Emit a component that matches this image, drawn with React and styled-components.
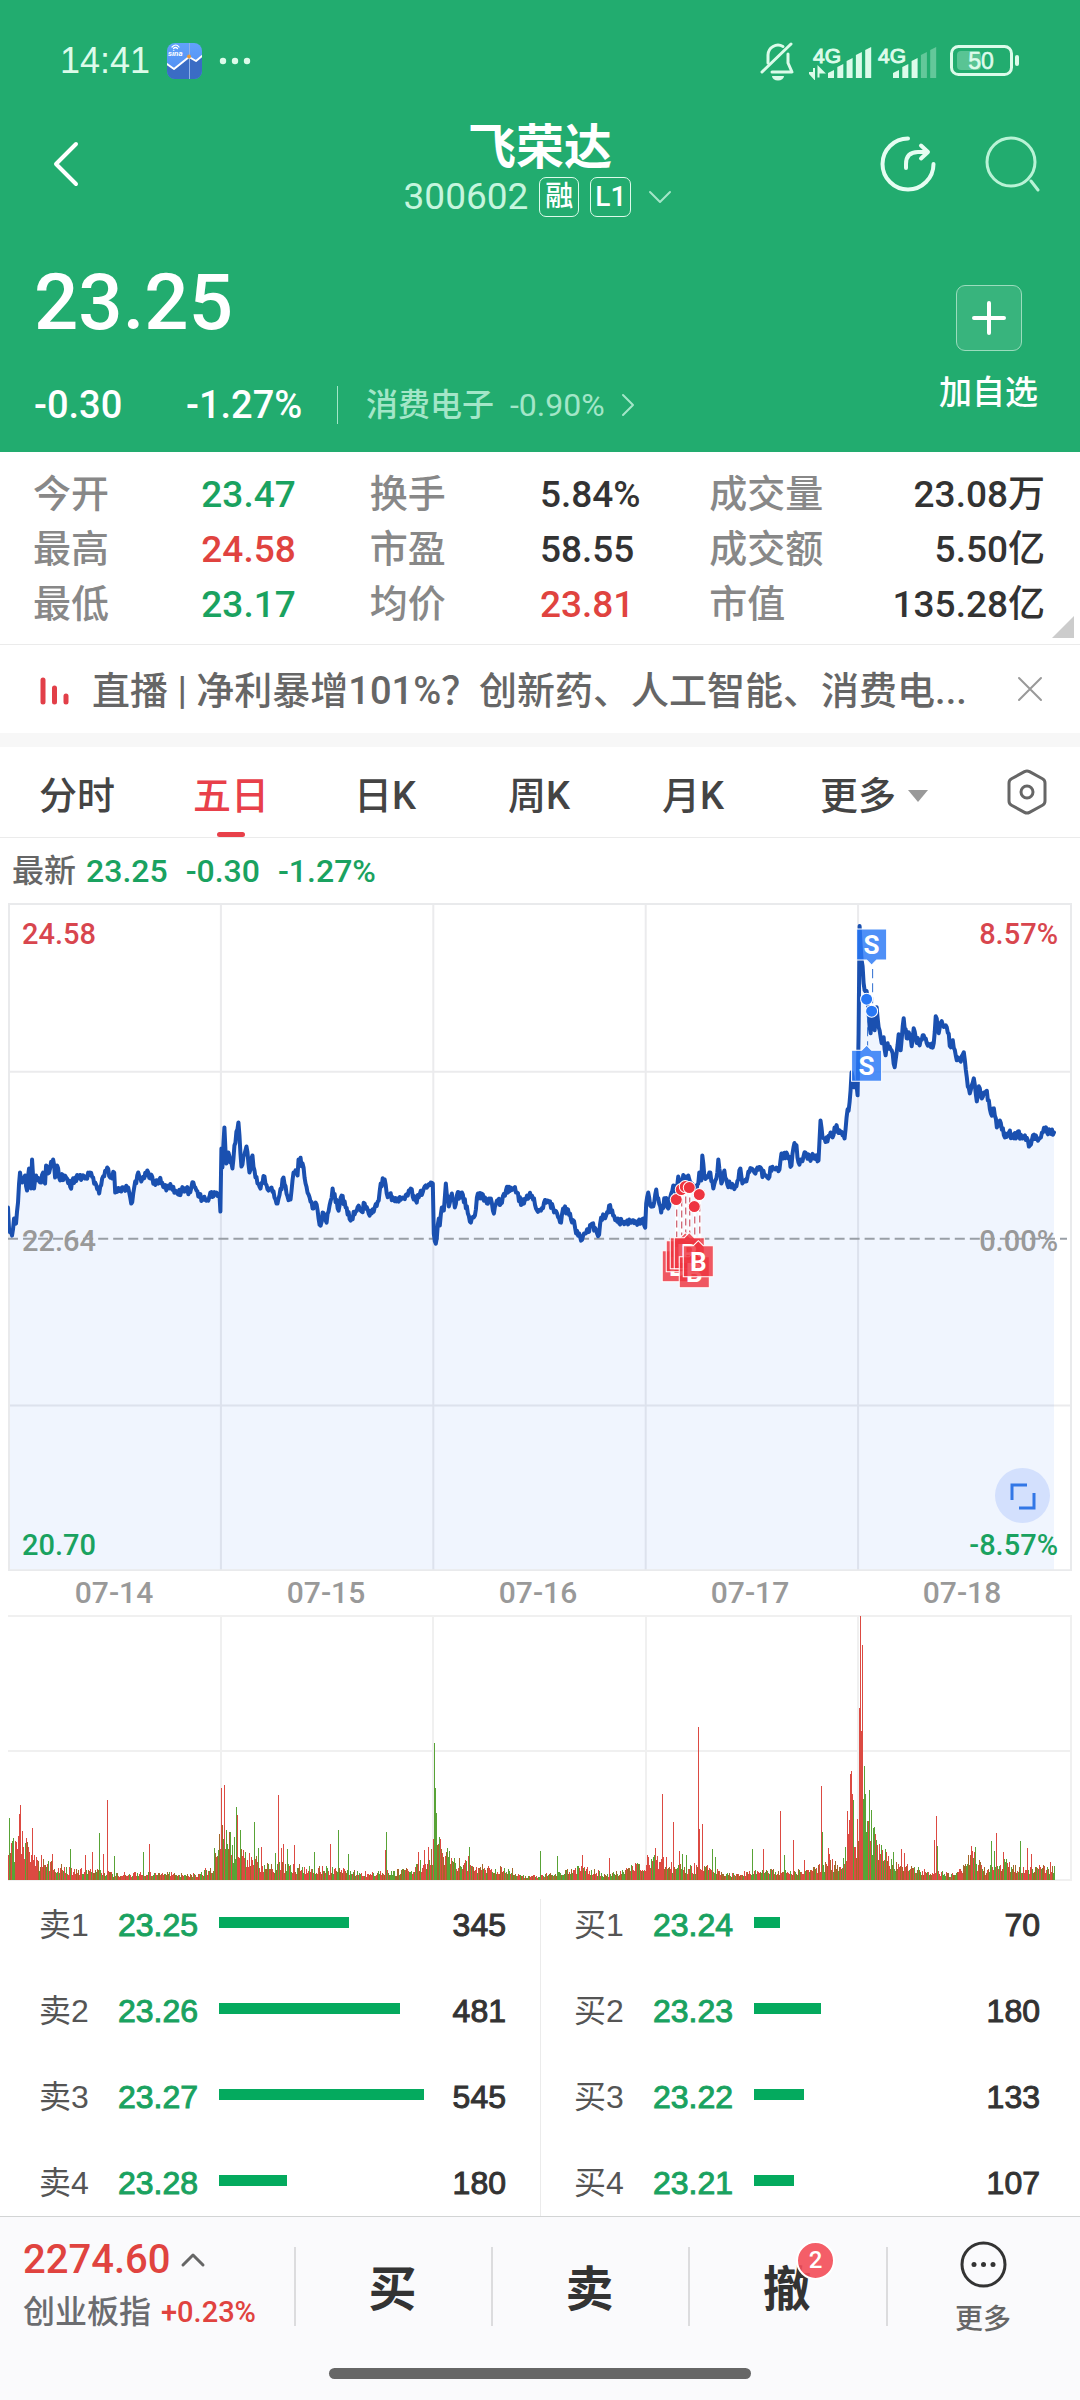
import React from "react";
import styled, { createGlobalStyle } from "styled-components";

const color = {
  green: "#22ac6f",
  mint: "#dcfbea",
  soft: "#a3e6c8",
  up: "#e0433f",
  down: "#1aa260",
  bar: "#04aa5e",
  line: "#ebebeb",
};

const Global = createGlobalStyle`
  * { box-sizing: border-box; }
  body { margin: 0; background: #fff; }
  button, select { font: inherit; color: inherit; background: none; border: 0; padding: 0; margin: 0; cursor: pointer; }
  a { color: inherit; text-decoration: none; }
  svg { display: block; }
`;

const Page = styled.main`
  font-family: Roboto, "Noto Sans CJK SC", sans-serif;
  font-weight: 500;
  color: #333;
  background: #fff;
`;

const Header = styled.header`
  background: ${color.green};
  color: #fff;
`;

const StatusBar = styled.div`
  height: 100px;
  padding: 22px 60px 0;
  display: flex;
  align-items: center;
  justify-content: space-between;
  color: ${color.mint};
`;

const StatusGroup = styled.div`
  display: flex;
  align-items: center;
  gap: ${(p) => p.$gap}px;
`;

const Clock = styled.time`
  font: 400 36px/44px "Liberation Sans", sans-serif;
`;

const NavBar = styled.nav`
  height: 128px;
  padding: 0 40px;
  display: grid;
  grid-template-columns: 1fr auto 1fr;
  align-items: center;
`;

const NavActions = styled.div`
  display: flex;
  justify-content: flex-end;
  gap: 48px;
`;

const IconButton = styled.button`
  display: inline-flex;
  justify-self: start;
`;

const TitleBlock = styled.div`
  display: flex;
  flex-direction: column;
  align-items: center;
  gap: 2px;
`;

const StockName = styled.h1`
  margin: 0;
  font-family: "Noto Sans CJK SC", sans-serif;
  font-size: 48px;
  line-height: 64px;
  font-weight: 700;
`;

const CodeRow = styled.div`
  display: flex;
  align-items: center;
  gap: 11px;
  font-size: 37px;
  line-height: 38px;
  font-weight: 400;
  color: #c6f5de;
`;

const Tag = styled.span`
  height: 40px;
  min-width: 40px;
  padding: 0 4px;
  border: 1px solid ${color.mint};
  border-radius: 7px;
  display: grid;
  place-items: center;
  font-size: 28px;
  line-height: 28px;
  font-weight: 500;
  color: #fff;
`;

const Quote = styled.section`
  display: flex;
  justify-content: space-between;
  padding: 27px 42px 25px 34px;
`;

const Price = styled.div`
  font-size: 78px;
  line-height: 96px;
`;

const ChangeRow = styled.div`
  display: flex;
  align-items: center;
  height: 44px;
  margin-top: 32px;
  font-size: 38px;
  line-height: 44px;
`;

const Change = styled.span`
  min-width: ${(p) => p.$w}px;
`;

const Sector = styled.a`
  display: flex;
  align-items: center;
  gap: 16px;
  height: 38px;
  padding-left: 28px;
  border-left: 1px solid ${color.soft};
  font-size: 32px;
  line-height: 38px;
  font-weight: 400;
  color: ${color.soft};
  span:first-child { font-weight: 500; }
`;

const AddButton = styled.button`
  display: flex;
  flex-direction: column;
  align-items: center;
  gap: 19px;
  margin-top: 30px;
  height: 128px;
  font-family: "Noto Sans CJK SC", sans-serif;
  font-size: 33px;
  line-height: 40px;
`;

const PlusBox = styled.span`
  width: 66px;
  height: 66px;
  border: 1px solid #9bdcbd;
  border-radius: 9px;
  background: rgba(255, 255, 255, 0.1);
  display: grid;
  place-items: center;
`;

const Stats = styled.dl`
  position: relative;
  margin: 0;
  padding: 15px 35px 12px 33px;
  display: grid;
  grid-template-columns: 168fr 168fr 170fr 169fr 160fr 175fr;
  border-bottom: 1px solid ${color.line};
  font-size: 38px;
  line-height: 55px;
  white-space: nowrap;
`;

const StatLabel = styled.dt`
  color: #888;
`;

const StatValue = styled.dd`
  margin: 0;
  font-size: 37px;
  color: ${(p) => color[p.$tone] || "#333"};
  text-align: ${(p) => (p.$end ? "right" : "left")};
`;

const Corner = styled.i`
  position: absolute;
  right: 6px;
  bottom: 6px;
  border: 11px solid transparent;
  border-right-color: #ccc;
  border-bottom-color: #ccc;
`;

const News = styled.div`
  height: 102px;
  padding: 0 37px 0 38px;
  border-bottom: 14px solid #f7f7f7;
  display: flex;
  align-items: center;
  justify-content: space-between;
  color: #666;
`;

const NewsLink = styled.a`
  display: flex;
  align-items: center;
  gap: 22px;
  min-width: 0;
  padding-top: 4px;
  font-size: 38px;
  line-height: 48px;
  white-space: nowrap;
  overflow: hidden;
`;

const Tabs = styled.div`
  height: 91px;
  border-bottom: 1px solid ${color.line};
  display: grid;
  grid-template-columns: repeat(4, 154fr) 154fr 208fr 98fr 4fr;
  color: #444;
  font-size: 38px;
  line-height: 48px;
`;

const Tab = styled.button`
  position: relative;
  padding-top: 8px;
  color: ${(p) => (p.$active ? "#e8404a" : "inherit")};
  &::after {
    content: "";
    display: ${(p) => (p.$active ? "block" : "none")};
    position: absolute;
    left: 50%;
    bottom: 0;
    width: 28px;
    height: 5px;
    margin-left: -14px;
    border-radius: 3px;
    background: #e8404a;
  }
`;

const MoreTab = styled.button`
  display: flex;
  align-items: center;
  justify-content: center;
  gap: 12px;
  padding-top: 8px;
`;

const Triangle = styled.i`
  border: 10px solid transparent;
  border-top: 12px solid #999;
  border-bottom: 0;
`;

const SettingsButton = styled.button`
  display: grid;
  place-items: center;
`;

const Latest = styled.div`
  display: flex;
  gap: 18px;
  padding: 11px 12px 10px;
  font-size: 32px;
  line-height: 44px;
  color: ${color.down};
`;

const LatestLabel = styled.span`
  color: #666;
  margin-right: -8px;
`;

const ChartBox = styled.figure`
  position: relative;
  margin: 0 8px;
  svg { width: 100%; height: auto; }
`;

const AxisLabel = styled.span`
  position: absolute;
  ${(p) => p.$side}: 14px;
  ${(p) => p.$edge}: ${(p) => p.$at};
  font-size: 29px;
  line-height: 34px;
  color: ${(p) => p.$color};
`;

const Expand = styled.button`
  position: absolute;
  right: 22px;
  bottom: 48px;
  width: 55px;
  height: 55px;
  border-radius: 50%;
  background: #d3e0fd;
  svg { width: 100%; height: 100%; }
`;

const Dates = styled.div`
  display: grid;
  grid-template-columns: repeat(5, 1fr);
  margin: 0 12px 0 8px;
  font-size: 30px;
  line-height: 44px;
  text-align: center;
  color: #999;
`;

const Book = styled.section`
  display: grid;
  grid-template-columns: 1fr 1fr;
  padding-top: 18px;
`;

const Side = styled.div`
  padding: 10px ${(p) => p.$right}px 17px 38px;
  border-left: 1px solid ${(p) => (p.$divided ? color.line : "transparent")};
  & + & { padding-left: 33px; }
`;

const BookTable = styled.table`
  width: 100%;
  table-layout: fixed;
  border-collapse: collapse;
  font: 400 32px/32px "Liberation Sans", "Noto Sans CJK SC", sans-serif;
  th, td { padding: 0 0 54px; font-weight: 400; text-align: left; vertical-align: top; white-space: nowrap; }
  tr:last-child th, tr:last-child td { padding-bottom: 0; }
  th { color: #555; width: 79px; }
  td:nth-child(2) { color: ${color.down}; width: 101px; -webkit-text-stroke: 1px ${color.down}; }
  td:last-child { text-align: right; width: 80px; -webkit-text-stroke: 1px #333; }
`;

const Depth = styled.div`
  height: 11px;
  margin-top: 8px;
  background: ${color.bar};
`;

const BottomBar = styled.footer`
  border-top: 1px solid #d2d4d4;
  background: #fafafc;
`;

const Actions = styled.div`
  display: grid;
  grid-template-columns: 294fr 197fr 197fr 198fr 194fr;
  height: 139px;
`;

const IndexLink = styled.a`
  padding: 19px 0 0 23px;
  color: ${color.up};
`;

const IndexValue = styled.div`
  display: flex;
  align-items: center;
  gap: 9px;
  font-size: 40px;
  line-height: 48px;
`;

const IndexName = styled.div`
  display: flex;
  align-items: center;
  gap: 10px;
  padding-top: 6px;
  font-size: 29px;
  line-height: 44px;
  white-space: nowrap;
  span { font-size: 32px; color: #6b6c70; }
`;

const Action = styled.button`
  position: relative;
  display: flex;
  flex-direction: column;
  align-items: center;
  justify-content: center;
  gap: 12px;
  font-size: ${(p) => (p.$small ? 28 : 48)}px;
  line-height: ${(p) => (p.$small ? 40 : 60)}px;
  font-weight: ${(p) => (p.$small ? 500 : 700)};
  color: ${(p) => (p.$small ? "#666" : "#333")};
  padding-top: 8px;
  &::before {
    content: "";
    position: absolute;
    left: 0;
    top: 30px;
    width: 2px;
    height: 79px;
    background: #dcdcde;
  }
`;

const Badge = styled.span`
  position: absolute;
  left: 50%;
  top: 24px;
  margin-left: 9px;
  width: 39px;
  height: 39px;
  border: 2px solid #fff;
  border-radius: 50%;
  background: rgba(243, 76, 88, 0.9);
  color: #fff;
  font-size: 24px;
  line-height: 35px;
  font-weight: 500;
`;

const HomeIndicator = styled.div`
  width: 39%;
  height: 11px;
  margin: 12px auto 0;
  border-radius: 6px;
  background: #666;
`;

const SafeArea = styled.div`
  height: 21px;
`;

/* ---------- data ---------- */

const stats = [
  ["今开", "23.47", "down"], ["换手", "5.84%"], ["成交量", "23.08万"],
  ["最高", "24.58", "up"], ["市盈", "58.55"], ["成交额", "5.50亿"],
  ["最低", "23.17", "down"], ["均价", "23.81", "up"], ["市值", "135.28亿"],
];

const asks = [["卖1", "23.25", 345], ["卖2", "23.26", 481], ["卖3", "23.27", 545], ["卖4", "23.28", 180]];
const bids = [["买1", "23.24", 70], ["买2", "23.23", 180], ["买3", "23.22", 133], ["买4", "23.21", 107]];
const MAX_QTY = 545;

const trend = `0,304 1,325 4,332 6,315 8,320 10,299 12,269 14,279 17,272 19,287 21,265 23,285 24,256 26,285 28,272 33,279 35,269 37,280 38,262 40,270 45,256 47,274 49,262 51,274 58,274 62,283 67,274 77,275 82,269 87,279 91,290 94,275 99,264 102,274 106,269 107,289 115,284 120,284 123,300 125,290 130,269 133,278 140,269 146,280 151,276 156,284 163,284 170,291 175,285 181,288 185,279 190,293 200,297 202,289 205,293 211,290 212,308 213,245 214,264 216,224 218,260 220,249 224,265 226,242 230,219 232,250 233,263 238,243 241,269 244,252 247,274 252,285 256,273 260,287 263,284 269,300 275,274 278,290 282,296 285,269 289,272 290,256 294,260 297,280 304,305 307,299 312,322 314,309 318,319 324,285 330,307 333,292 342,317 350,302 353,308 356,300 360,310 366,304 370,297 372,280 376,276 378,290 385,296 395,295 402,285 407,297 415,285 422,279 424,280 425,330 427,340 430,315 431,322 433,304 435,307 437,280 440,303 443,290 446,304 448,292 454,291 459,310 462,319 466,312 468,294 474,291 478,300 482,295 485,310 488,297 492,300 497,287 504,285 508,289 513,301 518,292 523,292 527,305 532,307 538,297 544,304 552,319 554,305 561,310 566,324 572,337 576,330 583,320 585,327 590,331 592,314 597,312 600,302 604,312 608,318 621,319 629,318 634,315 636,324 637,300 639,289 641,302 645,299 647,286 652,309 656,295 659,305 662,290 664,282 667,290 669,273 672,280 675,273 680,276 686,287 689,280 690,269 692,277 693,252 695,272 698,274 701,269 704,285 707,275 709,256 712,280 715,267 718,281 727,283 731,265 733,280 738,274 742,265 746,270 748,264 755,272 759,275 761,264 765,265 770,266 772,250 774,255 777,249 782,262 784,244 787,242 789,259 792,256 796,249 800,254 805,252 809,257 811,217 813,234 818,238 821,229 823,234 825,224 830,227 835,235 837,214 840,199 842,169 844,184 846,179 848,192 849,130 850,23 852,57 855,87 857,88 859,110 861,130 863,110 865,127 867,104 869,124 872,140 874,134 876,152 878,140 882,147 885,164 887,149 889,131 891,147 894,115 897,135 899,129 902,143 904,125 906,134 910,142 913,132 917,140 920,142 924,140 926,113 929,130 932,118 937,124 941,144 943,137 947,157 950,157 954,149 957,174 960,190 964,175 967,198 969,183 972,195 976,188 979,197 981,210 984,205 987,224 990,217 995,234 999,229 1004,235 1008,228 1012,235 1015,232 1020,242 1023,232 1027,235 1032,229 1036,224 1040,230 1044,229`
  .split(" ").map((p) => p.split(",").map(Number));

/* Deterministic pseudo-random sequence for tick noise. */
function sequence(seed) {
  let s = seed;
  return () => {
    s = (s * 16807) % 2147483647;
    return s / 2147483647;
  };
}

function buildTrend() {
  const rnd = sequence(71);
  const out = [];
  let dir = 1;
  trend.forEach(([x, y], i) => {
    out.push(`${x},${y}`);
    const next = trend[i + 1];
    if (!next) return;
    const gap = next[0] - x;
    for (let k = 1; k < gap; k += 1) {
      const t = k / gap;
      dir = rnd() > 0.3 ? -dir : dir;
      out.push(`${x + k},${(y + (next[1] - y) * t + dir * rnd() * 4).toFixed(1)}`);
    }
  });
  return out.join(" ");
}
const trendLine = buildTrend();

const envelope = [[0, 30], [12, 40], [30, 17], [60, 10], [85, 8], [110, 6], [150, 6], [190, 5], [205, 13], [213, 40], [235, 28], [255, 14], [300, 11], [320, 10], [360, 6], [400, 9], [420, 20], [430, 30], [445, 17], [480, 10], [500, 11], [515, 3], [540, 5], [570, 11], [585, 9], [595, 4], [610, 7], [632, 15], [645, 22], [665, 13], [700, 12], [715, 5], [750, 8], [800, 9], [820, 16], [832, 12], [840, 50], [846, 20], [849, 80], [853, 80], [862, 45], [872, 24], [890, 14], [910, 9], [945, 5], [960, 24], [975, 9], [985, 17], [1010, 12], [1045, 10]];

const spikes = `1,62g 11,66r 12,75r 18,42r 24,52r 33,25r 44,26r 62,31g 77,25r 84,28r 91,47g 95,26r 99,80r 106,24g 135,28g 141,36r 206,32g 213,92r 216,95r 218,50g 222,48g 228,73g 229,65r 232,50g 246,58g 250,32g 253,33r 266,27g 269,85r 272,32r 274,36r 278,31g 285,35r 305,28g 321,36r 329,50g 339,26g 376,30r 377,48g 409,28r 415,30r 419,33r 424,41r 425,137g 426,92g 427,67g 430,43g 431,41r 440,29g 459,24r 460,33g 531,29g 548,24g 573,25r 600,22r 638,25r 646,32r 653,86r 664,58r 670,29r 673,26g 677,25g 689,153r 690,51r 693,56r 703,31g 706,23g 743,31g 754,31r 771,69r 775,25g 784,40r 795,20r 811,94r 812,48g 818,32r 819,26r 837,69r 838,46r 839,60r 840,106r 841,109r 842,86r 843,80g 844,33r 847,61r 849,172r 850,264r 851,149r 852,235r 853,81g 854,114g 855,86g 856,48g 859,90g 861,70g 863,52g 865,46r 867,35r 871,35g 876,28r 883,28g 891,31r 894,27r 924,40r 926,64r 927,34g 961,34r 965,33g 981,39g 984,29g 986,47r 993,28r 1010,39g 1017,32r 1021,26r 1040,18r`
  .split(" ").map((s) => [parseInt(s, 10), parseInt(s.split(",")[1], 10), s.slice(-1)]);

function buildVolume() {
  const rnd = sequence(2025);
  const paths = { r: "", g: "", m: "" };
  const peaks = new Map(spikes.map(([x, h, c]) => [x, [h, c]]));
  let e = 0;
  for (let x = 0; x < 1045; x += 1) {
    while (e < envelope.length - 2 && x >= envelope[e + 1][0]) e += 1;
    const [x0, h0] = envelope[e];
    const [x1, h1] = envelope[e + 1];
    const base = h0 + ((h1 - h0) * (x - x0)) / (x1 - x0);
    const pick = rnd();
    const trendUp = Math.sin(x / 9) > 0 ? 0.52 : 0.32;
    let kind = pick < trendUp ? "r" : pick < trendUp + 0.3 ? "g" : "m";
    let h = Math.max(2, base * (0.5 + rnd() * 0.9));
    if (peaks.has(x)) [h, kind] = peaks.get(x);
    paths[kind] += `M${x + 0.5} 265v${-Math.round(h)}`;
  }
  return paths;
}
const volume = buildVolume();

const buys = [[653, 347, 667, 296], [657, 337, 672, 286], [661, 334, 676, 283], [665, 334, 680, 284], [670, 353, 685, 303], [674, 342, 690, 291]];

/* ---------- drawings ---------- */

const stroke = (w, c = "currentColor") => ({
  fill: "none", stroke: c, strokeWidth: w, strokeLinecap: "round", strokeLinejoin: "round",
});

const AppGlyph = () => (
  <svg width="35" height="36" viewBox="0 0 35 36">
    <defs>
      <linearGradient id="sky" x1="0" y1="0" x2="0" y2="1">
        <stop offset="0" stopColor="#62a2fb" /><stop offset="1" stopColor="#4d8af0" />
      </linearGradient>
      <clipPath id="tile"><rect width="35" height="36" rx="8" /></clipPath>
    </defs>
    <g clipPath="url(#tile)">
      <rect width="35" height="36" fill="url(#sky)" />
      <path d="M0 21l7 5 15-12 7 4 6-5v23H0z" fill="#3a6cc4" />
      <path d="M22.500 0v36" stroke="#8fb2ea" strokeWidth="1" />
      <path d="M0 21l7 5 15-12 7 4 6-5" {...stroke(2, "#fff")} />
      <circle cx="22" cy="13.500" r="2" fill="#e79a3c" />
      <path d="M5 4q4-4 7 0M6.500 5.500q2-2 4 0" {...stroke(1.200, "#fff")} />
      <text x="1" y="13" fontSize="8" fontWeight="700" fontStyle="italic" fill="#fff">sina</text>
    </g>
  </svg>
);

const BellOff = () => (
  <svg width="36" height="40" viewBox="0 0 36 40">
    <path d="M8 22V14a10 10 0 0 1 15-8.500M28 13v9l4 9H12" {...stroke(3)} />
    <path d="M2 31L31 3" {...stroke(3)} />
    <path d="M12 35h12a6 4.500 0 0 1-12 0z" fill="currentColor" />
  </svg>
);

const Signal = ({ level, data }) => (
  <svg width="63" height="38" viewBox="0 -4 63 38">
    <text x="4" y="17" fontSize="21" fontFamily="Liberation Sans" stroke="currentColor" strokeWidth="1" fill="currentColor">4G</text>
    {data && (
      <path d="M5 22v9.500M9.500 31.500V22M0.500 27l4.500 5v-5zM9.500 21.500l5 5h-5z" stroke="currentColor" strokeWidth="2" fill="currentColor" />
    )}
    {[5, 11, 17, 23, 28].map((h, i) => (
      <path key={h} d={`M${19 + i * 9.300} 32v${-h}l6 -3v${h + 3}z`} fill="currentColor" opacity={i < level ? 1 : 0.35} />
    ))}
  </svg>
);

const Battery = () => (
  <svg width="70" height="32" viewBox="0 0 70 32">
    <rect x="1.500" y="1.500" width="60" height="28" rx="7" {...stroke(3)} />
    <rect x="7" y="6" width="24" height="19" rx="4" fill="currentColor" opacity=".3" />
    <rect x="65" y="10" width="4" height="11" rx="2" fill="currentColor" />
    <text x="31" y="24" textAnchor="middle" fontSize="23" fontFamily="Liberation Sans" stroke="currentColor" strokeWidth=".6" fill="currentColor">50</text>
  </svg>
);

const Pin = ({ x, y, tipX, up, fill, letter }) => (
  <g>
    <path
      d={up
        ? `M${x} ${y}h${tipX - x - 5}l5 -5l5 5h${x + 30 - tipX - 5}v31h-30z`
        : `M${x} ${y}h30v31h${tipX + 5 - x - 30}l-5 5l-5 -5h${x - tipX + 5}z`}
      fill={fill} fillOpacity=".82" stroke="#fff" strokeWidth="1"
    />
    <text x={x + 15} y={y + 25} textAnchor="middle" fontSize="26" fontWeight="700" fill="#fff">{letter}</text>
  </g>
);

const PriceChart = () => (
  <svg viewBox="0 0 1062 667" role="img" aria-label="五日走势">
    <path d="M212.500 0V667M424.500 0V667M636.500 0V667M848.500 0V667M0 168.500H1062M0 501.500H1062" stroke="#ebebed" strokeWidth="2" />
    <polygon points={`0,667 ${trendLine} 1044,667`} fill="#3b82f6" fillOpacity=".08" />
    <rect x="1" y="1" width="1060" height="665" fill="none" stroke="#e9eaec" strokeWidth="2" />
    <path d="M0 335H1057" stroke="#999fa6" strokeWidth="2" strokeDasharray="10 5" />
    <polyline points={trendLine} {...stroke(4, "#1a50b0")} />
    <path d="M863 66V100" stroke="#2f6fd0" strokeWidth="1" strokeDasharray="9 5" />
    <path d="M858 110V144" stroke="#2f6fd0" strokeWidth="1" strokeDasharray="9 5" />
    <Pin x={847} y={26} tipX={862} fill="#2878f5" letter="S" />
    <Pin x={842} y={147} tipX={857} up fill="#2878f5" letter="S" />
    <circle cx="857" cy="96" r="6" fill="#2878f5" stroke="#fff" />
    <circle cx="862" cy="108" r="6" fill="#2878f5" stroke="#fff" />
    {buys.map(([x, y, cx, cy]) => (
      <path key={cx} d={`M${cx + 0.5} ${cy + 6}V${y - 4}`} stroke="#fff" strokeWidth="3" />
    ))}
    {buys.map(([x, y, cx, cy]) => (
      <path key={cx} d={`M${cx + 0.5} ${cy + 10}V${y - 4}`} stroke="#c0394d" strokeWidth="1" strokeDasharray="7 4" />
    ))}
    {buys.map(([x, y]) => (
      <Pin key={x} x={x} y={y} tipX={x + 15} up fill="#ee3440" letter="B" />
    ))}
    {buys.map(([x, y, cx, cy]) => (
      <circle key={cx} cx={cx} cy={cy} r="6" fill="#ee3440" stroke="#fff" />
    ))}
  </svg>
);

const VolumeChart = () => (
  <svg viewBox="0 0 1062 265" role="img" aria-label="成交量" shapeRendering="crispEdges">
    <path d="M0 1H1062M0 136H1062M212.500 0V265M424.500 0V265M636.500 0V265M848.500 0V265M1061 0V265M0 264.500H1062" stroke="#f0f0f0" strokeWidth="2" />
    <path d={volume.m} stroke="#a3672a" strokeWidth="1" />
    <path d={volume.g} stroke="#58a336" strokeWidth="1" />
    <path d={volume.r} stroke="#dc4a42" strokeWidth="1" />
  </svg>
);

const OrderTable = ({ label, rows }) => (
  <BookTable aria-label={label}>
    <tbody>
      {rows.map(([name, price, qty]) => (
        <tr key={name}>
          <th scope="row">{name}</th>
          <td>{price}</td>
          <td><Depth style={{ width: `${(qty / MAX_QTY) * 99}%` }} /></td>
          <td>{qty}</td>
        </tr>
      ))}
    </tbody>
  </BookTable>
);

export default function App() {
  return (
    <Page>
      <Global />
      <Header>
        <StatusBar>
          <StatusGroup $gap={17}>
            <Clock>14:41</Clock>
            <AppGlyph />
            <svg width="32" height="8" viewBox="0 0 32 8" fill="currentColor">
              <circle cx="4" cy="4" r="3.200" /><circle cx="16" cy="4" r="3.200" /><circle cx="28" cy="4" r="3.200" />
            </svg>
          </StatusGroup>
          <StatusGroup $gap={13}>
            <BellOff />
            <StatusGroup $gap={2}>
              <Signal level={5} data />
              <Signal level={3} />
            </StatusGroup>
            <Battery />
          </StatusGroup>
        </StatusBar>

        <NavBar>
          <IconButton aria-label="返回">
            <svg width="40" height="46" viewBox="0 0 40 46"><path d="M36 3L16 23l20 20" {...stroke(4)} /></svg>
          </IconButton>
          <TitleBlock>
            <StockName>飞荣达</StockName>
            <CodeRow>
              300602
              <Tag>融</Tag>
              <Tag>L1</Tag>
              <svg width="34" height="16" viewBox="0 0 34 16"><path d="M8 3l10 10L28 3" {...stroke(2, color.soft)} /></svg>
            </CodeRow>
          </TitleBlock>
          <NavActions>
            <IconButton aria-label="分享">
              <svg width="58" height="58" viewBox="0 0 58 58">
                <path d="M30 3.500A25.500 25.500 0 1 0 55.500 29" {...stroke(4, "#e6fdf2")} />
                <path d="M28 33v-4q0-12 12-12h9M43 10.500l7 6.500-7 6.500" {...stroke(4, "#e6fdf2")} />
              </svg>
            </IconButton>
            <IconButton aria-label="搜索">
              <svg width="56" height="58" viewBox="0 0 56 58">
                <circle cx="27" cy="27" r="24" {...stroke(3, "#b9f3d6")} />
                <path d="M47 46l7 9" {...stroke(3, "#b9f3d6")} />
              </svg>
            </IconButton>
          </NavActions>
        </NavBar>

        <Quote>
          <div>
            <Price>23.25</Price>
            <ChangeRow>
              <Change $w={152}>-0.30</Change>
              <Change $w={151}>-1.27%</Change>
              <Sector href="#sector">
                <span>消费电子</span>
                <span>-0.90%</span>
                <svg width="15" height="26" viewBox="0 0 15 26"><path d="M2 3l10 10L2 23" {...stroke(2)} /></svg>
              </Sector>
            </ChangeRow>
          </div>
          <AddButton>
            <PlusBox>
              <svg width="36" height="36" viewBox="0 0 36 36"><path d="M18 3v30M3 18h30" {...stroke(4, "#fff")} /></svg>
            </PlusBox>
            加自选
          </AddButton>
        </Quote>
      </Header>

      <Stats>
        {stats.map(([label, value, tone], i) => (
          <React.Fragment key={label}>
            <StatLabel>{label}</StatLabel>
            <StatValue $tone={tone} $end={i % 3 === 2}>{value}</StatValue>
          </React.Fragment>
        ))}
        <Corner />
      </Stats>

      <News>
        <NewsLink href="#live">
          <svg width="32" height="30" viewBox="0 0 32 30"><path d="M5 4v22M16.500 12v14M28 20v6" {...stroke(5, "#e23f48")} /></svg>
          直播 | 净利暴增101%？创新药、人工智能、消费电...
        </NewsLink>
        <IconButton aria-label="关闭">
          <svg width="26" height="26" viewBox="0 0 26 26"><path d="M2 2l22 22M24 2L2 24" {...stroke(2, "#999")} /></svg>
        </IconButton>
      </News>

      <Tabs>
        <Tab>分时</Tab>
        <Tab $active>五日</Tab>
        <Tab>日K</Tab>
        <Tab>周K</Tab>
        <Tab>月K</Tab>
        <MoreTab>更多<Triangle /></MoreTab>
        <SettingsButton aria-label="图表设置">
          <svg width="42" height="46" viewBox="0 0 42 46">
            <path d="M18.500 2.600q2.500-1.400 5 0l13 7.200q2.500 1.400 2.500 4.200v18q0 2.800-2.500 4.200l-13 7.200q-2.500 1.400-5 0l-13-7.200Q3 34.800 3 32V14q0-2.800 2.500-4.200z" {...stroke(3, "#666")} />
            <circle cx="21" cy="23" r="6" {...stroke(3, "#666")} />
          </svg>
        </SettingsButton>
      </Tabs>

      <Latest>
        <LatestLabel>最新</LatestLabel>
        <span>23.25</span>
        <span>-0.30</span>
        <span>-1.27%</span>
      </Latest>

      <ChartBox>
        <PriceChart />
        <AxisLabel $side="left" $edge="top" $at="14px" $color="#d8464e">24.58</AxisLabel>
        <AxisLabel $side="right" $edge="top" $at="14px" $color="#d8464e">8.57%</AxisLabel>
        <AxisLabel $side="left" $edge="top" $at="48%" $color="#999">22.64</AxisLabel>
        <AxisLabel $side="right" $edge="top" $at="48%" $color="#999">0.00%</AxisLabel>
        <AxisLabel $side="left" $edge="bottom" $at="9px" $color={color.down}>20.70</AxisLabel>
        <AxisLabel $side="right" $edge="bottom" $at="9px" $color={color.down}>-8.57%</AxisLabel>
        <Expand aria-label="全屏">
          <svg viewBox="0 0 55 55"><path d="M17 32V17h15M39 25v15H24" fill="none" stroke="#3277e6" strokeWidth="3" /></svg>
        </Expand>
      </ChartBox>
      <Dates>
        <span>07-14</span><span>07-15</span><span>07-16</span><span>07-17</span><span>07-18</span>
      </Dates>
      <ChartBox>
        <VolumeChart />
      </ChartBox>

      <Book>
        <Side $right={34}><OrderTable label="卖盘" rows={asks} /></Side>
        <Side $right={40} $divided><OrderTable label="买盘" rows={bids} /></Side>
      </Book>

      <BottomBar>
        <Actions>
          <IndexLink href="#index">
            <IndexValue>
              2274.60
              <svg width="26" height="16" viewBox="0 0 26 16"><path d="M3 13L13 3l10 10" {...stroke(3, "#666")} /></svg>
            </IndexValue>
            <IndexName><span>创业板指</span>+0.23%</IndexName>
          </IndexLink>
          <Action>买</Action>
          <Action>卖</Action>
          <Action>撤<Badge>2</Badge></Action>
          <Action $small>
            <svg width="47" height="47" viewBox="0 0 47 47">
              <circle cx="23.500" cy="23.500" r="21.500" {...stroke(3, "#333")} />
              <g fill="#333"><circle cx="14" cy="23.500" r="2.500" /><circle cx="23.500" cy="23.500" r="2.500" /><circle cx="33" cy="23.500" r="2.500" /></g>
            </svg>
            更多
          </Action>
        </Actions>
        <HomeIndicator />
        <SafeArea />
      </BottomBar>
    </Page>
  );
}
